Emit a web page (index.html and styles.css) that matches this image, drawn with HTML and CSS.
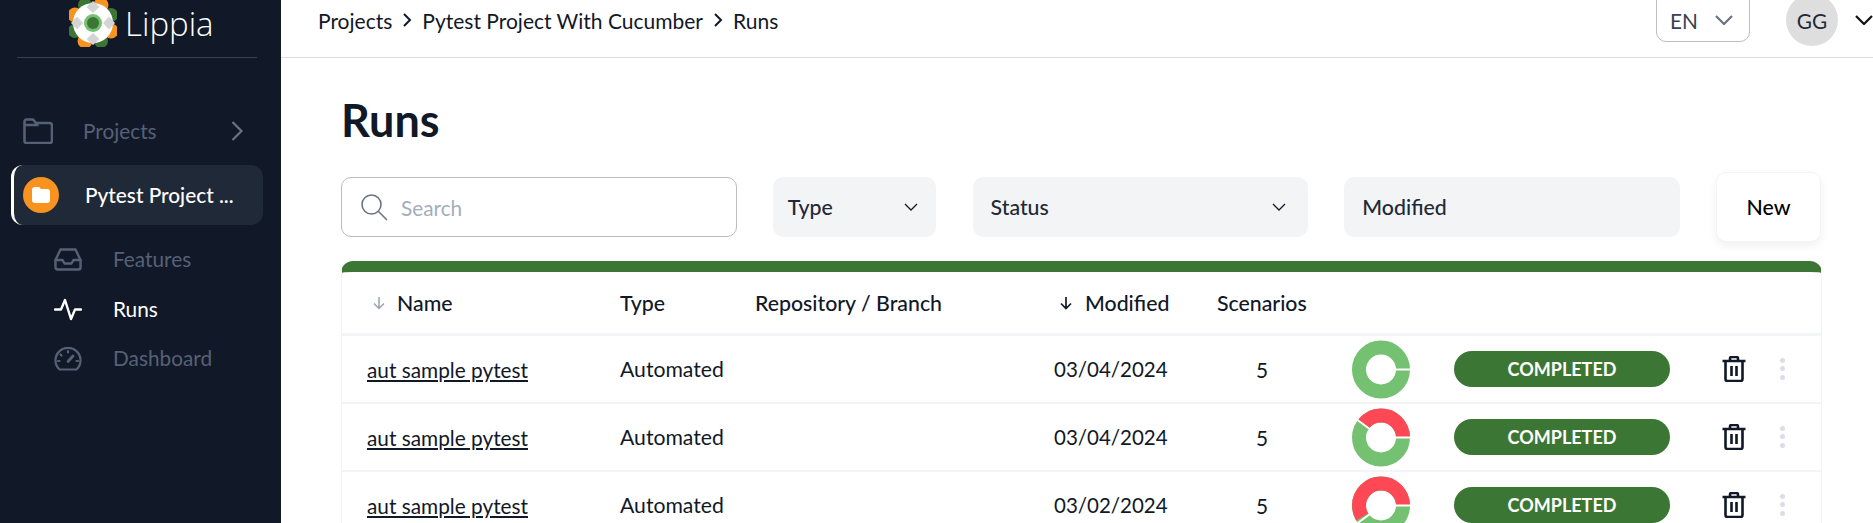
FILE: index.html
```html
<!DOCTYPE html>
<html lang="en">

<head>
    <meta charset="UTF-8">
    <meta name="viewport" content="width=device-width, initial-scale=1.0">
    <title>Runs</title>
    <link rel="stylesheet" href="styles.css">
</head>

<body>
    <div class="app">
        <aside class="sidebar">
            <div class="brand">
                <svg class="brand-logo" viewBox="0 0 48 48" width="48" height="48">
                    <circle cx="32" cy="6" r="7.5" fill="#f7931e"/>
                    <circle cx="42" cy="16" r="7" fill="#3c7635"/>
                    <circle cx="42" cy="32" r="7.5" fill="#f7931e"/>
                    <circle cx="32" cy="42" r="7" fill="#3c7635"/>
                    <circle cx="16" cy="42" r="7.5" fill="#f7931e"/>
                    <circle cx="6" cy="32" r="7" fill="#3c7635"/>
                    <circle cx="6" cy="16" r="7.5" fill="#f7931e"/>
                    <circle cx="16" cy="6" r="7" fill="#3c7635"/>
                    <circle cx="24" cy="24" r="20" fill="#fff"/>
                    <path d="M24 2l6.500 6-6.500 6-6.500-6zM24 34l6.500 6-6.500 6-6.500-6zM8 17.500l6 6.500-6 6.500-6-6.500zM40 17.500l6 6.500-6 6.500-6-6.500z" fill="#d4d4d4"/>
                    <circle cx="24" cy="24" r="9" fill="#73c171"/>
                    <circle cx="24" cy="24" r="6" fill="#3c7635"/>
                </svg>
                <span class="brand-name">Lippia</span>
            </div>

            <nav class="nav">
                <div class="nav-projects">
                    <svg class="folder-icon" viewBox="0 0 30 26" width="30" height="26" fill="none" stroke="#566176" stroke-width="2.600" stroke-linejoin="round">
                        <path d="M1.500 23V3.500a2 2 0 0 1 2-2h6.500l3 3.500h13.500a2.500 2.500 0 0 1 2.500 2.500v15a2.500 2.500 0 0 1-2.500 2.500h-23a2 2 0 0 1-2-2z"/>
                        <path d="M1.500 7h14"/>
                    </svg>
                    <span class="nav-label">Projects</span>
                    <svg class="nav-chevron" viewBox="0 0 12 20" width="12" height="20" fill="none" stroke="#6b7280" stroke-width="2.200">
                        <path d="M1.500 1l9 9-9 9"/>
                    </svg>
                </div>

                <div class="nav-active">
                    <span class="project-dot">
                        <svg viewBox="0 0 18 16" width="18" height="16" fill="#fff">
                            <path d="M0 3a3 3 0 0 1 3-3h4l2 2h6a3 3 0 0 1 3 3v8a3 3 0 0 1-3 3H3a3 3 0 0 1-3-3z"/>
                        </svg>
                    </span>
                    <span class="project-name">Pytest Project ...</span>
                </div>

                <div class="nav-sub">
                    <svg viewBox="0 0 28 23" width="28" height="23" fill="none" stroke="#566176" stroke-width="2.400" stroke-linejoin="round" stroke-linecap="round">
                        <path d="M1.500 12L6.500 1.500h15L26.500 12v7.500a2 2 0 0 1-2 2h-21a2 2 0 0 1-2-2z"/>
                        <path d="M1.500 12h7l2 3.500h7l2-3.500h7"/>
                    </svg>
                    <span>Features</span>
                </div>
                <div class="nav-sub nav-sub-on">
                    <svg viewBox="0 0 28 23" width="28" height="23" fill="none" stroke="#fff" stroke-width="2.400" stroke-linejoin="round" stroke-linecap="round">
                        <path d="M1 11.500h6L11 2l6 19 4-9.500h6"/>
                    </svg>
                    <span>Runs</span>
                </div>
                <div class="nav-sub">
                    <svg viewBox="0 0 28 24" width="28" height="24" fill="none" stroke="#566176" stroke-width="2.200" stroke-linecap="round">
                        <path d="M5.500 22.500a12.500 12.500 0 1 1 17 0z"/>
                        <path d="M14 14.500l5-5.500" stroke-width="2.800"/>
                        <path d="M14 4v1.500M6.500 7.500l1 1M4 14h1.500M24 14h-1.500"/>
                    </svg>
                    <span>Dashboard</span>
                </div>
            </nav>
        </aside>

        <div class="main">
            <header class="topbar">
                <div class="crumbs">
                    <span>Projects</span>
                    <svg viewBox="0 0 10 14" width="10" height="14" fill="none" stroke="#111827" stroke-width="2"><path d="M2 1l6 6-6 6"/></svg>
                    <span>Pytest Project With Cucumber</span>
                    <svg viewBox="0 0 10 14" width="10" height="14" fill="none" stroke="#111827" stroke-width="2"><path d="M2 1l6 6-6 6"/></svg>
                    <span>Runs</span>
                </div>
                <div class="lang">
                    <span>EN</span>
                    <svg viewBox="0 0 18 10" width="18" height="10" fill="none" stroke="#6b7280" stroke-width="2.200"><path d="M1 1l8 8 8-8"/></svg>
                </div>
                <div class="avatar">GG</div>
                <svg class="user-chevron" viewBox="0 0 18 10" width="18" height="10" fill="none" stroke="#111" stroke-width="2.200"><path d="M1 1l8 8 8-8"/></svg>
            </header>

            <section class="content">
                <h1 class="page-title">Runs</h1>

                <div class="toolbar">
                    <div class="search">
                        <svg viewBox="0 0 28 28" width="28" height="28" fill="none" stroke="#6b7280" stroke-width="1.600" stroke-linecap="round">
                            <circle cx="11.500" cy="11.500" r="9.500"/>
                            <path d="M18.500 18.500l8 8"/>
                        </svg>
                        <span>Search</span>
                    </div>
                    <div class="filter filter-type">
                        <span>Type</span>
                        <svg viewBox="0 0 14 8" width="14" height="8" fill="none" stroke="#111827" stroke-width="1.300"><path d="M1 1l6 6 6-6"/></svg>
                    </div>
                    <div class="filter filter-status">
                        <span>Status</span>
                        <svg viewBox="0 0 14 8" width="14" height="8" fill="none" stroke="#111827" stroke-width="1.300"><path d="M1 1l6 6 6-6"/></svg>
                    </div>
                    <div class="filter filter-modified">
                        <span>Modified</span>
                    </div>
                    <button class="btn-new" type="button">New</button>
                </div>

                <div class="table">
                    <div class="row row-head">
                        <div class="cell-sort">
                            <svg viewBox="0 0 14 14" width="14" height="14" fill="none" stroke="#9ca3af" stroke-width="1.500"><path d="M7 1v11.500M2 7.500l5 5 5-5"/></svg>
                            <span>Name</span>
                        </div>
                        <div>Type</div>
                        <div>Repository / Branch</div>
                        <div class="cell-sort cell-sort-date">
                            <svg viewBox="0 0 14 14" width="14" height="14" fill="none" stroke="#111827" stroke-width="1.700"><path d="M7 1v11.500M2 7.500l5 5 5-5"/></svg>
                            <span>Modified</span>
                        </div>
                        <div>Scenarios</div>
                    </div>

                    <div class="row">
                        <a class="run-name">aut sample pytest</a>
                        <div class="run-type">Automated</div>
                        <div></div>
                        <div class="run-date">03/04/2024</div>
                        <div class="scenarios">5</div>
                        <svg class="donut" viewBox="0 0 58 58" width="58" height="59">
                            <circle cx="29" cy="29" r="22" fill="none" stroke="#73c171" stroke-width="14"/>
                            <path d="M43 29h15" stroke="#fff" stroke-width="2"/>
                        </svg>
                        <div class="status">COMPLETED</div>
                        <svg class="trash" viewBox="0 0 24 26" width="24" height="26" fill="none" stroke="#111827" stroke-width="2.600" stroke-linejoin="round">
                            <path d="M0.500 5h23M8 5V2.500a1.500 1.500 0 0 1 1.500-1.500h5a1.500 1.500 0 0 1 1.500 1.500V5M3.500 5v18a2 2 0 0 0 2 2h13a2 2 0 0 0 2-2V5M9.500 10v10M14.500 10v10"/>
                        </svg>
                        <div class="dots"><i></i><i></i><i></i></div>
                    </div>

                    <div class="row">
                        <a class="run-name">aut sample pytest</a>
                        <div class="run-type">Automated</div>
                        <div></div>
                        <div class="run-date">03/04/2024</div>
                        <div class="scenarios">5</div>
                        <svg class="donut" viewBox="0 0 58 58" width="58" height="59">
                            <circle cx="29" cy="29" r="22" fill="none" stroke="#73c171" stroke-width="14"/>
                            <circle cx="29" cy="29" r="22" fill="none" stroke="#ff4855" stroke-width="14" pathLength="360" stroke-dasharray="143 217" stroke-dashoffset="143"/>
                            <path d="M43 29h15M18 20.800L5.500 11.500" stroke="#fff" stroke-width="2"/>
                        </svg>
                        <div class="status">COMPLETED</div>
                        <svg class="trash" viewBox="0 0 24 26" width="24" height="26" fill="none" stroke="#111827" stroke-width="2.600" stroke-linejoin="round">
                            <path d="M0.500 5h23M8 5V2.500a1.500 1.500 0 0 1 1.500-1.500h5a1.500 1.500 0 0 1 1.500 1.500V5M3.500 5v18a2 2 0 0 0 2 2h13a2 2 0 0 0 2-2V5M9.500 10v10M14.500 10v10"/>
                        </svg>
                        <div class="dots"><i></i><i></i><i></i></div>
                    </div>

                    <div class="row">
                        <a class="run-name">aut sample pytest</a>
                        <div class="run-type">Automated</div>
                        <div></div>
                        <div class="run-date">03/02/2024</div>
                        <div class="scenarios">5</div>
                        <svg class="donut" viewBox="0 0 58 58" width="58" height="59">
                            <circle cx="29" cy="29" r="22" fill="none" stroke="#73c171" stroke-width="14"/>
                            <circle cx="29" cy="29" r="22" fill="none" stroke="#ff4855" stroke-width="14" pathLength="360" stroke-dasharray="211 149" stroke-dashoffset="211"/>
                            <path d="M43 29h15M18 37.500L5 47" stroke="#fff" stroke-width="2"/>
                        </svg>
                        <div class="status">COMPLETED</div>
                        <svg class="trash" viewBox="0 0 24 26" width="24" height="26" fill="none" stroke="#111827" stroke-width="2.600" stroke-linejoin="round">
                            <path d="M0.500 5h23M8 5V2.500a1.500 1.500 0 0 1 1.500-1.500h5a1.500 1.500 0 0 1 1.500 1.500V5M3.500 5v18a2 2 0 0 0 2 2h13a2 2 0 0 0 2-2V5M9.500 10v10M14.500 10v10"/>
                        </svg>
                        <div class="dots"><i></i><i></i><i></i></div>
                    </div>
                </div>
            </section>
        </div>
    </div>
</body>

</html>
```

FILE: styles.css
```css
html,
body {
    margin: 0;
    padding: 0;
    height: 523px;
    overflow: hidden;
}

body {
    font-family: 'Lato', 'Liberation Sans', sans-serif;
    font-size: 20.8px;
    color: #111827;
    background-color: white;
}

.app {
    display: flex;
    height: 523px;
}

/* sidebar */
.sidebar {
    flex: none;
    width: 281px;
    background-color: #111827;
}

.brand {
    display: flex;
    align-items: center;
    height: 57px;
    margin: 0 24px 0 17px;
    padding-left: 52px;
    box-sizing: content-box;
    width: 188px;
    border-bottom: 1px solid #374151;
    overflow: visible;
}

.brand-logo {
    flex: none;
    margin-top: -11px;
}

.brand-name {
    margin-left: 8px;
    margin-top: -11px;
    font-family: 'Open Sans', sans-serif;
    font-weight: 300;
    font-size: 33px;
    color: white;
}

.nav {
    padding-top: 49px;
}

.nav-projects {
    display: flex;
    align-items: center;
    height: 48px;
    padding-left: 23px;
    color: #566176;
}

.nav-label {
    margin-left: 30px;
    margin-top: -2px;
}

.nav-chevron {
    margin-left: 74px;
}

.nav-active {
    display: flex;
    align-items: center;
    width: 252px;
    height: 60px;
    margin: 10px 0 10px 11px;
    padding-left: 9px;
    box-sizing: border-box;
    background-color: #1f2937;
    border-left: 3px solid white;
    border-radius: 12px;
}

.project-dot {
    display: flex;
    align-items: center;
    justify-content: center;
    flex: none;
    width: 36px;
    height: 36px;
    border-radius: 50%;
    background-color: #f7931e;
}

.project-name {
    margin-left: 26px;
    margin-top: -1px;
    font-weight: 500;
    color: white;
}

.nav-sub {
    display: flex;
    align-items: center;
    height: 49.5px;
    padding-left: 54px;
    color: #566176;
}

.nav-sub span {
    margin-left: 31px;
    margin-top: -2px;
}

.nav-sub-on {
    color: white;
}

/* top bar */
.main {
    flex: 1;
    min-width: 0;
}

.topbar {
    display: flex;
    align-items: center;
    height: 40px;
    padding: 0 0 17px 37px;
    border-bottom: 1px solid #dddde0;
}

.crumbs {
    display: flex;
    align-items: center;
    gap: 10px;
    flex: 1;
    font-size: 21px;
    color: #111827;
}

.lang {
    display: flex;
    align-items: center;
    box-sizing: border-box;
    width: 94px;
    height: 60px;
    margin-top: -17px;
    padding: 17px 0 0 13px;
    border: 1px solid #bdbdc2;
    border-radius: 10px;
    color: #374151;
}

.lang svg {
    margin-left: 17px;
}

.avatar {
    display: flex;
    align-items: center;
    justify-content: center;
    flex: none;
    width: 52px;
    height: 52px;
    margin-left: 36px;
    border-radius: 50%;
    background-color: #dedede;
    color: #1f2937;
}

.user-chevron {
    margin-left: 17px;
    flex: none;
}

/* page */
.content {
    padding: 0 52px 0 60px;
}

.page-title {
    margin: 0;
    padding-top: 35px;
    font-size: 45px;
    line-height: 54px;
    font-weight: 700;
    color: #111827;
}

.toolbar {
    display: flex;
    align-items: center;
    margin-top: 25px;
}

.search {
    display: flex;
    align-items: center;
    box-sizing: border-box;
    width: 396px;
    height: 60px;
    padding-left: 18px;
    border: 1px solid #b9bcc2;
    border-radius: 10px;
    color: #a5adbb;
}

.search span {
    margin-left: 13px;
}

.filter {
    display: flex;
    align-items: center;
    justify-content: space-between;
    box-sizing: border-box;
    height: 60px;
    padding: 0 22px 0 18px;
    border-radius: 10px;
    background-color: #f3f4f6;
    font-size: 21.3px;
    font-weight: 500;
    color: #1f2937;
}

.filter-type {
    width: 163px;
    margin-left: 36px;
    padding: 0 18px 0 15px;
}

.filter-status {
    width: 336px;
    margin-left: 37px;
}

.filter-modified {
    width: 336px;
    margin-left: 36px;
    padding-left: 18px;
}

.btn-new {
    width: 105px;
    height: 70px;
    margin-left: 36px;
    border: 1px solid #f3f4f6;
    border-radius: 10px;
    background-color: white;
    box-shadow: 0 4px 10px rgba(0, 0, 0, 0.06);
    font-family: inherit;
    font-size: 21.3px;
    font-weight: 500;
    color: black;
}

/* table */
.table {
    margin-top: 19px;
    margin-right: -1px;
    border-top: 11px solid #3c7635;
    border-left: 1px solid #f3f4f6;
    border-right: 1px solid #f3f4f6;
    border-radius: 12px 12px 0 0;
}

.row {
    display: grid;
    grid-template-columns: 253px 135px 299px 163px 135px 102px 268px 60px 1fr;
    align-items: center;
    height: 66px;
    padding-left: 25px;
    border-bottom: 2px solid #f3f4f6;
}

.row-head {
    height: 61px;
    border-bottom-width: 3px;
    font-size: 21.3px;
    font-weight: 500;
}

.cell-sort {
    display: flex;
    align-items: center;
    gap: 11px;
    padding-left: 5px;
}

.cell-sort-date {
    gap: 12px;
}

.run-name {
    color: #111827;
    text-decoration: underline;
}

.run-type {
    font-size: 21.2px;
}

.run-date {
    font-size: 20.5px;
}

.scenarios {
    padding-left: 39px;
}

.donut {
    display: block;
}

.status {
    display: flex;
    align-items: center;
    justify-content: center;
    width: 216px;
    height: 36px;
    border-radius: 18px;
    background-color: #3c7635;
    font-weight: 700;
    font-size: 18px;
    color: white;
}

.trash {
    display: block;
}

.dots {
    display: flex;
    flex-direction: column;
    gap: 3.500px;
    padding-bottom: 1px;
}

.dots i {
    width: 5px;
    height: 5px;
    margin-left: -2px;
    border-radius: 50%;
    background-color: #dcdde6;
}
```
